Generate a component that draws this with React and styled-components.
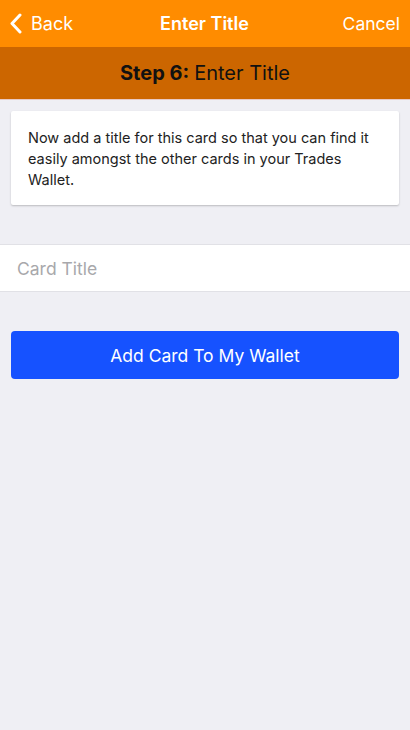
import React from "react";
import styled, { createGlobalStyle } from "styled-components";

const Global = createGlobalStyle`
  html, body { margin: 0; padding: 0; background: #efeff4; }
  body { font-family: Inter, Roboto, "Liberation Sans", sans-serif; -webkit-font-smoothing: antialiased; }
  * { box-sizing: border-box; }
`;

const Page = styled.div`
  width: 410px;
  min-height: 730px;
  background: #efeff4;
  display: flex;
  flex-direction: column;
`;

const NavBar = styled.header`
  height: 47px;
  background: #ff8c00;
  display: grid;
  grid-template-columns: 1fr auto 1fr;
  align-items: center;
  color: #fff;
  padding: 0 10px 0 9px;
`;

const NavButton = styled.button`
  background: none;
  border: none;
  padding: 0;
  color: #fff;
  font: inherit;
  font-size: ${(p) => (p.$right ? "17.5px" : "18px")};
  display: flex;
  align-items: center;
  gap: 9px;
  justify-self: ${(p) => (p.$right ? "end" : "start")};
  cursor: pointer;
`;

const NavTitle = styled.h1`
  margin: 0;
  font-size: 18px;
  font-weight: 600;
`;

const StepBar = styled.div`
  height: 53px;
  background: #cc6600;
  display: flex;
  align-items: center;
  justify-content: center;
  font-size: 20px;
  color: #111;
  border-bottom: 1px solid #e8c9c4;
`;

const StepLabel = styled.strong`
  font-weight: 700;
  margin-right: 5px;
`;

const Content = styled.main`
  display: flex;
  flex-direction: column;
  padding-top: 11px;
`;

const InfoCard = styled.div`
  margin: 0 11px;
  background: #fff;
  border-radius: 2px;
  box-shadow: 0 1px 2px rgba(0, 0, 0, 0.22);
  padding: 16px 18px 15px 17px;
  font-size: 14.5px;
  line-height: 21px;
  color: #222;
`;

const FieldRow = styled.div`
  margin-top: 39px;
  height: 48px;
  background: #fff;
  border-top: 1px solid #e1e1e6;
  border-bottom: 1px solid #e1e1e6;
  display: flex;
  align-items: center;
  padding: 0 17px;
`;

const TitleInput = styled.input`
  border: none;
  outline: none;
  width: 100%;
  font: inherit;
  font-size: 17.5px;
  color: #222;
  background: transparent;
  padding: 0;
  &::placeholder { color: #a8a8ab; }
`;

const PrimaryButton = styled.button`
  margin: 39px 11px 0;
  height: 48px;
  border: none;
  border-radius: 4px;
  background: #1652ff;
  color: #fff;
  font: inherit;
  font-size: 17.5px;
  cursor: pointer;
`;

const Chevron = () => (
  <svg width="13" height="21" viewBox="0 0 13 21" fill="none">
    <path d="M11 2 L3 10.5 L11 19" stroke="#fff" strokeWidth="3" strokeLinecap="round" strokeLinejoin="round" />
  </svg>
);

export default function App() {
  return (
    <Page>
      <Global />
      <NavBar>
        <NavButton>
          <Chevron />
          Back
        </NavButton>
        <NavTitle>Enter Title</NavTitle>
        <NavButton $right>Cancel</NavButton>
      </NavBar>
      <StepBar>
        <StepLabel>Step 6:</StepLabel> Enter Title
      </StepBar>
      <Content>
        <InfoCard>
          Now add a title for this card so that you can find it easily amongst the other cards in your Trades Wallet.
        </InfoCard>
        <FieldRow>
          <TitleInput placeholder="Card Title" />
        </FieldRow>
        <PrimaryButton>Add Card To My Wallet</PrimaryButton>
      </Content>
    </Page>
  );
}
